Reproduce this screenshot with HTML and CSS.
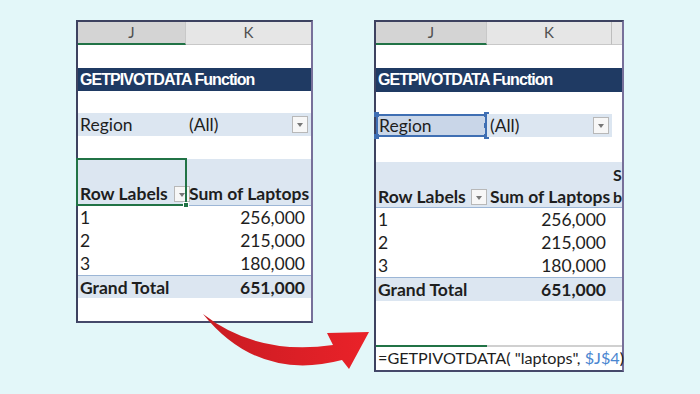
FILE: index.html
```html
<!DOCTYPE html>
<html lang="en">
<head>
  <meta charset="UTF-8">
  <title>GETPIVOTDATA Function</title>
  <link rel="stylesheet" href="styles.css">
</head>
<body>

  <div class="stage">

    <div class="sheet sheet-left">
      <div class="row col-heads">
        <div class="colhead sel">J</div>
        <div class="colhead">K</div>
      </div>
      <div class="row gap-24"></div>
      <div class="row title">GETPIVOTDATA Function</div>
      <div class="row gap-22"></div>
      <div class="row region">
        <div class="cell">Region</div>
        <div class="cell filter">(All)<span class="drop"></span></div>
      </div>
      <div class="row gap-23"></div>
      <div class="row pivot-head">
        <div class="cell labels">Row Labels<span class="drop small"></span>
          <span class="cell-sel"><span class="fill-handle"></span></span>
        </div>
        <div class="cell num-head">Sum of Laptops</div>
      </div>
      <div class="row data"><div class="cell">1</div><div class="cell num">256,000</div></div>
      <div class="row data"><div class="cell">2</div><div class="cell num">215,000</div></div>
      <div class="row data"><div class="cell">3</div><div class="cell num">180,000</div></div>
      <div class="row total"><div class="cell">Grand Total</div><div class="cell num">651,000</div></div>
      <div class="row gap-23"></div>
    </div>

    <div class="sheet sheet-right">
      <div class="row col-heads">
        <div class="colhead sel">J</div>
        <div class="colhead">K</div>
        <div class="colhead"></div>
      </div>
      <div class="row gap-24"></div>
      <div class="row title tall">GETPIVOTDATA Function</div>
      <div class="row gap-22"></div>
      <div class="row region">
        <div class="cell picked">Region
          <span class="handle tl"></span><span class="handle tr"></span>
          <span class="handle bl"></span><span class="handle br"></span>
          <span class="handle mr"></span>
        </div>
        <div class="cell filter">(All)<span class="drop"></span></div>
        <div class="cell blank"></div>
      </div>
      <div class="row gap-25"></div>
      <div class="row pivot-head short">
        <div class="cell labels">Row Labels<span class="drop small"></span></div>
        <div class="cell num-head">Sum of Laptops</div>
        <div class="cell cut">S<br>b</div>
      </div>
      <div class="row data"><div class="cell">1</div><div class="cell num">256,000</div><div></div></div>
      <div class="row data"><div class="cell">2</div><div class="cell num">215,000</div><div></div></div>
      <div class="row data"><div class="cell">3</div><div class="cell num">180,000</div><div></div></div>
      <div class="row total tall"><div class="cell">Grand Total</div><div class="cell num">651,000</div><div></div></div>
      <div class="row gap-44"></div>
      <div class="formula">=GETPIVOTDATA( "laptops", <span class="ref">$J$4</span>)</div>
    </div>

  </div>

  <svg class="arrow" width="700" height="394" viewBox="0 0 700 394">
    <defs>
      <linearGradient id="red" x1="0" y1="0" x2="1" y2="0">
        <stop offset="0" stop-color="#c81b22"/>
        <stop offset="1" stop-color="#ea2229"/>
      </linearGradient>
    </defs>
    <path fill="url(#red)" d="M203 314 Q257 356 333 345 L327 333 L369 332 L349 369 L342 360 Q258 382 203 314 Z"/>
  </svg>

</body>
</html>
```

FILE: styles.css
```css
* { box-sizing: border-box; }

body {
  margin: 0;
  width: 700px;
  height: 394px;
  overflow: hidden;
  position: relative;
  background: #e3f7f9;
  font-family: Lato, "Open Sans", sans-serif;
  color: #1e1e1e;
}

.stage {
  display: flex;
  align-items: flex-start;
  gap: 61px;
  padding: 20px 0 0 76px;
}

.sheet {
  background: #fff;
  border: 2px solid #3d4260;
  border-right-color: #77709a;
  border-bottom-color: #45496a;
}

.sheet-left { width: 237px; }
.sheet-right { width: 250px; }

.row {
  display: grid;
  height: 23px;
  font-size: 17.5px;
  line-height: 23px;
}

.sheet-left .row { grid-template-columns: 108px 125px; }
.sheet-right .row { grid-template-columns: 111px 125px 10px; }

.gap-22 { height: 22px; }
.gap-23 { height: 23px; }
.gap-24 { height: 24px; }
.gap-25 { height: 25px; }
.gap-44 { height: 44px; }

.cell {
  position: relative;
  padding-left: 2px;
  white-space: nowrap;
}

/* column letters */
.col-heads {
  height: 22px;
  background: #e6e6e6;
  font-size: 15px;
  line-height: 21px;
  color: #505050;
}

.colhead {
  text-align: center;
  border-right: 1px solid #c8c8c8;
  border-bottom: 1px solid #c8c8c8;
}

.colhead:last-child { border-right: none; }

.colhead.sel {
  background: #d4d4d4;
  border-bottom: 2px solid #217346;
}

.sheet-right .colhead:nth-child(2) { border-right: 1px solid #bdbdbd; }

/* title bar */
.title {
  display: block;
  background: #1f3a63;
  color: #fff;
  font-family: "Liberation Sans", Arial, sans-serif;
  font-weight: bold;
  font-size: 16px;
  letter-spacing: -0.95px;
  padding-left: 2px;
}

.title.tall { height: 24px; line-height: 24px; }

/* report filter */
.region .cell { background: #dce6f1; }
.region .cell.blank { background: #fff; }

.filter { padding-left: 3px; }

.drop {
  position: absolute;
  right: 3px;
  top: 3px;
  width: 16px;
  height: 17px;
  background: #f7f7f7;
  border: 1px solid #b8b8b8;
}

.drop::after {
  content: "";
  position: absolute;
  left: 4px;
  top: 6px;
  border-left: 3.5px solid transparent;
  border-right: 3.5px solid transparent;
  border-top: 4px solid #777;
}

.drop.small {
  display: inline-block;
  position: relative;
  right: auto;
  top: auto;
  vertical-align: -2px;
  margin-left: 6px;
}

.picked {
  background: #c9d6e8 !important;
  border: 2px solid #3f6fb3;
  line-height: 19px;
  padding-left: 1px;
}

.handle {
  position: absolute;
  width: 5px;
  height: 5px;
  background: #3f6fb3;
}

.handle.tl { left: -4px; top: -4px; }
.handle.tr { right: -4px; top: -4px; }
.handle.bl { left: -4px; bottom: -4px; }
.handle.br { right: -4px; bottom: -4px; }
.handle.mr { right: -4px; top: 7px; height: 5px; }

/* pivot table */
.pivot-head {
  height: 47px;
  background: #dce6f1;
  border-bottom: 1px solid #9cb6d6;
  font-weight: bold;
  align-items: end;
}

.pivot-head.short { height: 46px; }

.pivot-head .cell { line-height: 22px; }

.labels .drop.small {
  width: 16px;
  height: 16px;
}

.sheet-right .labels .drop.small { margin-left: 5px; }

.num-head { padding-left: 3px; }

.cut {
  align-self: stretch;
  padding: 2px 0 0 1px;
  font-size: 16px;
  line-height: 26px;
  overflow: visible;
}

.cell-sel {
  position: absolute;
  left: -2px;
  right: -1px;
  bottom: -1px;
  height: 48px;
  border: 2px solid #217346;
}

.fill-handle {
  position: absolute;
  right: -4px;
  bottom: -4px;
  width: 6px;
  height: 6px;
  background: #217346;
  border: 1px solid #fff;
}

.num {
  text-align: right;
  padding-right: 6px;
}

.total {
  background: #dce6f1;
  border-top: 1px solid #9cb6d6;
  font-weight: bold;
}

.total.tall { height: 24px; }

/* formula bar */
.formula {
  height: 25px;
  border-top: 2px solid #217346;
  border-image: linear-gradient(to right, #217346 111px, #d0d0d0 111px) 1;
  font-size: 16.2px;
  line-height: 22px;
  padding-left: 2px;
  white-space: nowrap;
}

.ref { color: #4a86d0; }

.arrow {
  position: absolute;
  left: 0;
  top: 0;
  pointer-events: none;
}
```
